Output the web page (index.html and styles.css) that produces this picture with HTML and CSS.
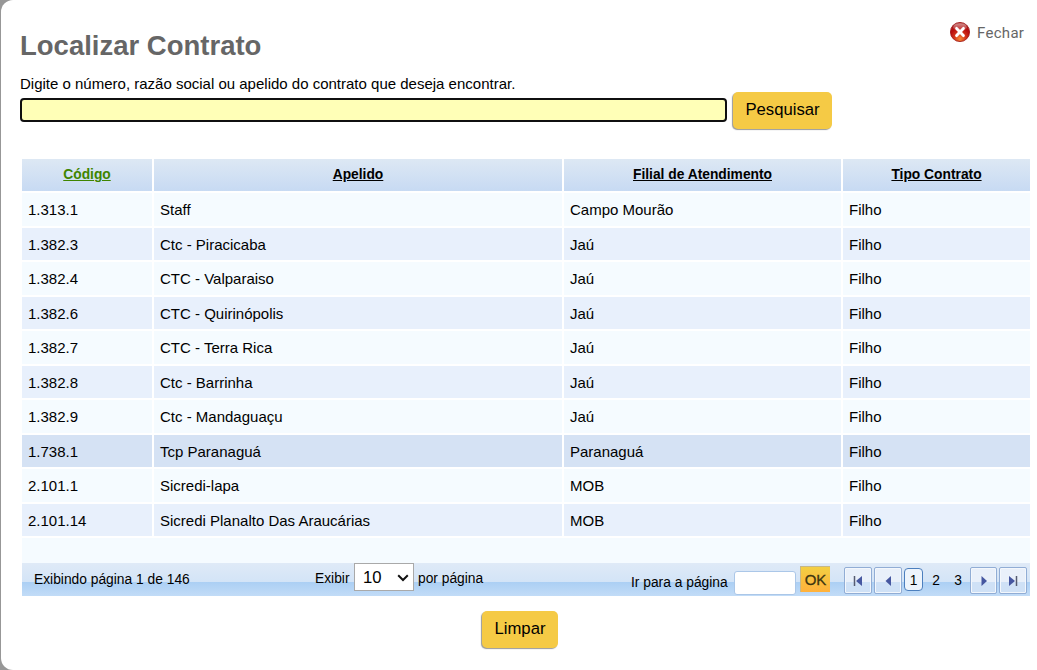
FILE: index.html
```html
<!DOCTYPE html>
<html lang="pt-BR">
<head>
<meta charset="utf-8">
<title>Localizar Contrato</title>
<link rel="stylesheet" href="styles.css">
</head>
<body>
<main class="dialog">
  <header class="top">
    <h1 class="title">Localizar Contrato</h1>
    <a class="close">
      <svg class="close-icon" width="20" height="20" viewBox="0 0 20 20">
        <defs>
          <radialGradient id="ball" cx="50%" cy="85%" r="80%"><stop offset="0" stop-color="#f58a35"/><stop offset=".35" stop-color="#d63a1c"/><stop offset=".7" stop-color="#b80d0d"/><stop offset="1" stop-color="#a31c1c"/></radialGradient>
          <linearGradient id="shine" x2="0" y2="1"><stop offset="0" stop-color="#fff" stop-opacity=".5"/><stop offset="1" stop-color="#fff" stop-opacity=".08"/></linearGradient>
        </defs>
        <circle cx="10" cy="10" r="9.6" fill="url(#ball)" stroke="#9c1010" stroke-width=".8"/>
        <ellipse cx="10" cy="5.2" rx="6.8" ry="4" fill="url(#shine)"/>
        <path d="M6.6 6.4l6.8 7.2M13.4 6.4l-6.8 7.2" stroke="#fff" stroke-width="2.9" stroke-linecap="round"/>
      </svg>
      <span class="close-label">Fechar</span>
    </a>
  </header>
  <p class="hint">Digite o número, razão social ou apelido do contrato que deseja encontrar.</p>
  <div class="search">
    <input class="search-input" type="text">
    <button class="button search-button">Pesquisar</button>
  </div>
  <section class="grid">
    <div class="row head"><span class="cell sorted">Código</span><span class="cell">Apelido</span><span class="cell">Filial de Atendimento</span><span class="cell">Tipo Contrato</span></div>
    <div class="row"><span class="cell">1.313.1</span><span class="cell">Staff</span><span class="cell">Campo Mourão</span><span class="cell">Filho</span></div>
    <div class="row alt"><span class="cell">1.382.3</span><span class="cell">Ctc - Piracicaba</span><span class="cell">Jaú</span><span class="cell">Filho</span></div>
    <div class="row"><span class="cell">1.382.4</span><span class="cell">CTC - Valparaiso</span><span class="cell">Jaú</span><span class="cell">Filho</span></div>
    <div class="row alt"><span class="cell">1.382.6</span><span class="cell">CTC - Quirinópolis</span><span class="cell">Jaú</span><span class="cell">Filho</span></div>
    <div class="row"><span class="cell">1.382.7</span><span class="cell">CTC - Terra Rica</span><span class="cell">Jaú</span><span class="cell">Filho</span></div>
    <div class="row alt"><span class="cell">1.382.8</span><span class="cell">Ctc - Barrinha</span><span class="cell">Jaú</span><span class="cell">Filho</span></div>
    <div class="row"><span class="cell">1.382.9</span><span class="cell">Ctc - Mandaguaçu</span><span class="cell">Jaú</span><span class="cell">Filho</span></div>
    <div class="row alt hover"><span class="cell">1.738.1</span><span class="cell">Tcp Paranaguá</span><span class="cell">Paranaguá</span><span class="cell">Filho</span></div>
    <div class="row"><span class="cell">2.101.1</span><span class="cell">Sicredi-lapa</span><span class="cell">MOB</span><span class="cell">Filho</span></div>
    <div class="row alt"><span class="cell">2.101.14</span><span class="cell">Sicredi Planalto Das Araucárias</span><span class="cell">MOB</span><span class="cell">Filho</span></div>
    <div class="spacer"></div>
    <div class="pager">
      <span class="pager-status">Exibindo página 1 de 146</span>
      <div class="page-size">
        <span>Exibir</span>
        <span class="select">10
          <svg class="chevron" width="12" height="8" viewBox="0 0 12 8"><path d="M1.2 1.3L6 6l4.800-4.700" fill="none" stroke="#111" stroke-width="2"/></svg>
        </span>
        <span>por página</span>
      </div>
      <span class="goto-label">Ir para a página</span>
      <input class="goto-input" type="text">
      <button class="ok">OK</button>
      <nav class="pages">
        <a class="nav-button"><svg width="10" height="12" viewBox="0 0 10 12"><path d="M1.500 1v10" stroke="#555b70" stroke-width="1.500"/><path d="M9 1v10L3 6z" fill="#4657a0"/></svg></a>
        <a class="nav-button"><svg width="10" height="12" viewBox="0 0 10 12"><path d="M8 1v10L2.500 6z" fill="#4657a0"/></svg></a>
        <a class="page current">1</a>
        <a class="page">2</a>
        <a class="page">3</a>
        <a class="nav-button next"><svg width="10" height="12" viewBox="0 0 10 12"><path d="M2.500 1v10L8 6z" fill="#4657a0"/></svg></a>
        <a class="nav-button"><svg width="10" height="12" viewBox="0 0 10 12"><path d="M8.500 1v10" stroke="#555b70" stroke-width="1.500"/><path d="M1 1v10L7 6z" fill="#4657a0"/></svg></a>
      </nav>
    </div>
  </section>
  <button class="button clear">Limpar</button>
</main>
</body>
</html>
```
FILE: styles.css
```css
* { box-sizing: border-box; }
body {
  margin: 0;
  padding-left: 1px;
  height: 670px;
  overflow: hidden;
  background: #979797;
  font: 15px/18px "Liberation Sans", Arial, sans-serif;
  color: #000;
}
.dialog {
  height: 670px;
  padding: 0 7px 0 19px;
  background: #fff;
  border-radius: 12px 0 0 12px;
}
.top { display: flex; justify-content: space-between; height: 75px; }
.title { margin: 30px 0 0; font-size: 27.500px; line-height: 32px; color: #666; }
.close { display: flex; width: 74px; height: 20px; margin: 22px 6px 0 0; gap: 7px; }
.close-icon { flex: none; }
.close-label {
  font: 400 15px/22px Roboto, sans-serif;
  letter-spacing: .3px;
  color: #666;
}
.hint { margin: 0 0 -1px; height: 18px; white-space: nowrap; }
.search { display: flex; height: 67px; gap: 5px; }
.search-input {
  width: 707px;
  height: 24px;
  margin: 6px 0 0;
  border: 2px solid #101010;
  border-radius: 4px;
  background: #ffffb7;
}
.button {
  display: block;
  margin: 0;
  padding: 0 0 2px;
  border: 0;
  border-radius: 5px;
  background: #f5ca45;
  box-shadow: -1px 1px 1px #9a9a9a;
  font: 16.700px/20px "Liberation Sans", Arial, sans-serif;
  color: #000;
}
.search-button { width: 99px; height: 37px; margin-left: 1px; }
.grid { width: 1008px; margin-left: 2px; }
.row {
  display: grid;
  grid-template-columns: 130px 408px 277px 187px;
  column-gap: 2px;
  height: 32.500px;
  margin-bottom: 2px;
}
.cell { padding: 8px 6px 0; background: #f5fbff; white-space: nowrap; }
.alt .cell { background: #e8f0fc; }
.hover .cell { background: #d5e2f4; }
.head { height: 32px; }
.head .cell {
  padding-top: 7px;
  background: linear-gradient(#dde8f4, #c7daf3);
  font-size: 13.800px;
  font-weight: bold;
  text-align: center;
  text-decoration: underline;
}
.head .sorted { color: #3f8500; }
.spacer { height: 25px; background: #f5fbff; }
.pager {
  display: flex;
  height: 33px;
  padding-left: 12px;
  font-size: 13.800px;
  white-space: nowrap;
  background: linear-gradient(#dfeaf7 0, #d3e4f7 19px, #abcff4 19px, #c2dcf7 33px);
}
.pager-status { width: 281px; padding-top: 8px; }
.page-size { display: grid; grid-template-columns: 35px 60px auto; width: 316px; column-gap: 4px; line-height: 32px; }
.select {
  display: flex;
  align-items: center;
  justify-content: space-between;
  width: 60px;
  height: 28px;
  padding: 1px 4px 0 8px;
  border: 1px solid #a9a9a9;
  background: #fff;
  font-size: 16.700px;
}
.goto-label { width: 103px; padding-top: 11px; }
.goto-input {
  width: 62px;
  height: 24px;
  margin: 8px 4px 0 0;
  border: 1px solid #abc7e8;
  border-radius: 3px;
  background: #fff;
}
.ok {
  width: 30px;
  height: 26px;
  margin: 3px 14px 0 0;
  padding: 0;
  border: 1px solid #c5b789;
  border-right-width: 0;
  border-bottom-width: 0;
  background: linear-gradient(#f3cf43, #ffb13b);
  font: 15px/24px "Liberation Sans", Arial, sans-serif;
  -webkit-text-stroke: .3px #3e3510;
  color: #3e3510;
}
.pages { display: flex; padding-top: 4px; }
.nav-button {
  display: flex;
  align-items: center;
  justify-content: center;
  width: 28px;
  height: 27px;
  margin-right: 2px;
  border: 1px solid #91add5;
  border-radius: 2px;
  background: linear-gradient(#e9f0fa 55%, #cfe1f6 55%);
  box-shadow: inset 0 0 0 1px #f3f7fc;
}
.page { width: 22px; height: 23px; margin-top: 1px; line-height: 25px; text-align: center; }
.current {
  width: 19px;
  margin-right: 2px;
  line-height: 23px;
  border: 1px solid #4c7fbe;
  border-radius: 4px;
  background: #edf4fc;
}
.next { width: 27px; margin-left: 1px; }
.clear { width: 76px; height: 37px; margin: 15px auto 0 462px; }
```
